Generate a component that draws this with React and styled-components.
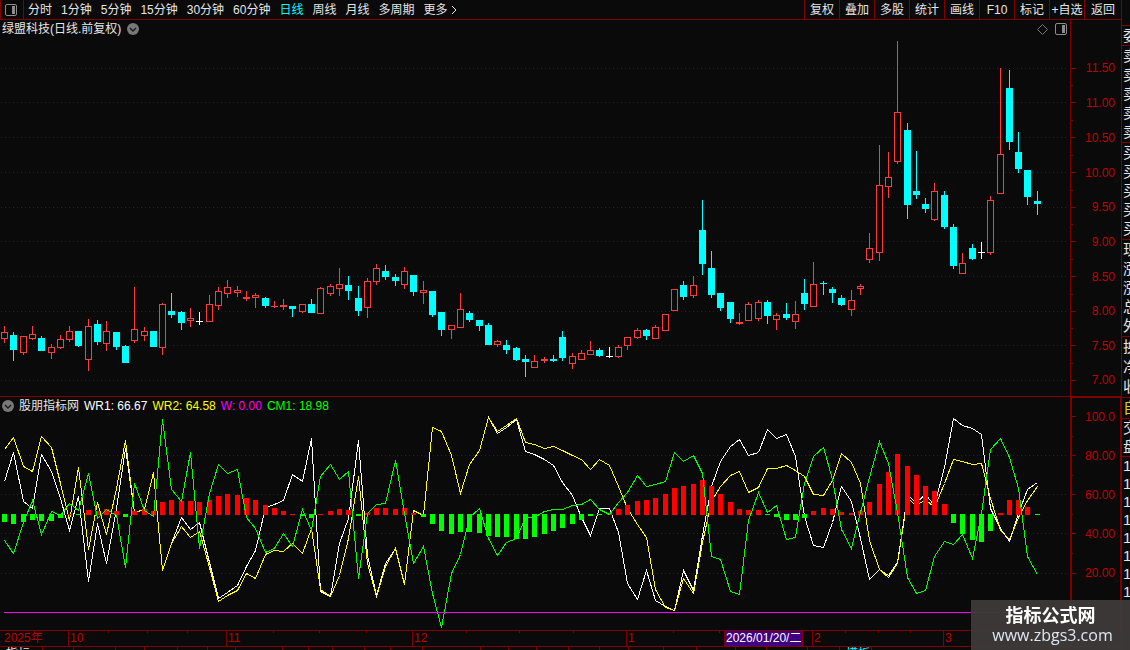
import React, { useState } from "react";
import styled, { createGlobalStyle } from "styled-components";

const GlobalStyle = createGlobalStyle`
  * {
    box-sizing: border-box;
  }
  body {
    margin: 0;
    background: #0a0a0a;
    overflow: hidden;
  }
  button {
    margin: 0;
    padding: 0;
    border: none;
    background: none;
    color: inherit;
    font: inherit;
    cursor: pointer;
  }
  ul, ol {
    margin: 0;
    padding: 0;
    list-style: none;
  }
`;

const LINE = "#800000";
const BG = "#0a0a0a";

const Terminal = styled.div`
  display: flex;
  height: 100vh;
  background: ${BG};
  color: #e6e6e6;
  font-family: "Liberation Sans", "Noto Sans CJK SC", sans-serif;
  font-size: 12px;
  line-height: 18px;
  white-space: nowrap;
`;

const Workspace = styled.div`
  flex: 1;
  min-width: 0;
  display: flex;
  flex-direction: column;
`;

const Toolbar = styled.header`
  flex: 0 0 20px;
  display: flex;
  border-bottom: 1px solid ${LINE};
`;

const LayoutButton = styled.button`
  width: 24px;
  padding-left: 4px;
  border-left: 1px solid ${LINE};
  border-right: 1px solid ${LINE};
  svg {
    display: block;
  }
`;

const Periods = styled.nav`
  flex: 1;
  display: flex;
  gap: 9px;
  padding-left: 4px;
`;

const Period = styled.button`
  color: ${(props) => (props.$active ? "#00ffff" : "#e6e6e6")};
  display: flex;
  align-items: center;
`;

const Tools = styled.div`
  display: grid;
  grid-template-columns: repeat(8, 35px) 37px;
`;

const Tool = styled.button`
  border-left: 1px solid ${LINE};
`;

const Pane = styled.section`
  flex: ${(props) => props.$rows} 1 0;
  min-height: 0;
  display: flex;
`;

const Divider = styled.div`
  flex: 0 0 1px;
  background: ${LINE};
`;

const Plot = styled.div`
  flex: 1;
  min-width: 0;
  position: relative;
`;

const Drawing = styled.svg`
  display: block;
  width: 100%;
  height: 100%;
  shape-rendering: crispEdges;
`;

const PaneHead = styled.div`
  position: absolute;
  top: 0;
  left: 2px;
  right: 3px;
  display: flex;
  align-items: center;
  gap: ${(props) => props.$gap};
  svg {
    display: block;
  }
`;

const HeadTools = styled.div`
  margin-left: auto;
  display: flex;
  align-items: center;
  gap: 7px;
`;

const Reading = styled.span`
  color: ${(props) => props.$color};
`;

const Axis = styled.div`
  flex: 0 0 51px;
  display: flex;
  border-left: 1px solid ${LINE};
  box-shadow: ${(props) => (props.$selected ? `inset 1px 1px ${LINE}, inset -1px 0 ${LINE}` : "none")};
  color: #c00000;
`;

const AxisTicks = styled.svg`
  width: 5px;
  height: 100%;
  shape-rendering: crispEdges;
`;

const AxisLabels = styled.ol`
  flex: 1;
  display: grid;
  grid-template-rows: ${(props) => props.$tracks};
  padding-right: 6px;
  text-align: right;
  li {
    min-height: 0;
    display: flex;
    align-items: center;
    justify-content: flex-end;
  }
`;

const TimeAxis = styled.div`
  flex: 0 0 16px;
  min-height: 0;
  position: relative;
  display: grid;
  grid-template-columns: 68fr 158fr 186fr 214fr 186fr 131fr 127fr;
  margin-right: 51px;
  border-top: 1px solid ${LINE};
  color: #c00000;
  line-height: 15px;
`;

const Month = styled.span`
  padding-left: ${(props) => (props.$first ? "4px" : "1px")};
  border-left: ${(props) => (props.$first ? "none" : `1px solid ${LINE}`)};
`;

const TimeTicks = styled.svg`
  position: absolute;
  top: 0;
  left: 0;
  width: 100%;
  height: 2px;
  shape-rendering: crispEdges;
`;

const DateFlag = styled.time`
  position: absolute;
  top: 0;
  left: 724px;
  height: 15px;
  width: 79px;
  padding-left: 1px;
  border: solid ${LINE};
  border-width: 0 1px;
  background: #400080;
  color: #ffffff;
  line-height: 15px;
`;

const Tabs = styled.div`
  flex: 0 0 4px;
  display: flex;
  overflow: hidden;
  border-top: 1px solid ${LINE};
`;

const Tab = styled.span`
  flex: 0 0 ${(props) => props.$width}px;
  padding-left: 6px;
  border-right: 1px solid ${LINE};
  color: ${(props) => (props.$active ? "#00ffff" : "#e6e6e6")};
  line-height: 14px;
`;

const Quotes = styled.aside`
  flex: 0 0 9px;
  overflow: hidden;
  border-left: 1px solid ${LINE};
  font-size: 15px;
`;

const QuoteGroup = styled.ul`
  height: ${(props) => props.$height}px;
  display: grid;
  grid-auto-rows: 1fr;
  padding-left: 1px;
  border-bottom: ${(props) => (props.$open ? "none" : `1px solid ${LINE}`)};
  color: ${(props) => props.$color || "#e6e6e6"};
  li {
    min-height: 0;
    display: flex;
    align-items: center;
  }
`;

const Watermark = styled.div`
  position: fixed;
  right: 0;
  bottom: 0;
  width: 159px;
  height: 50px;
  padding-top: 4px;
  background: rgba(62, 57, 57, 0.97);
  text-align: center;
  line-height: 21px;
`;

const SiteName = styled.strong`
  display: block;
  font-size: 18px;
  font-family: "Noto Sans CJK SC", sans-serif;
  color: #ffffff;
`;

const SiteUrl = styled.span`
  display: block;
  padding-left: 4px;
  font-size: 16px;
  font-family: "Open Sans", sans-serif;
  color: #dfe6f2;
`;

const periods = ["分时", "1分钟", "5分钟", "15分钟", "30分钟", "60分钟", "日线", "周线", "月线", "多周期", "更多"];
const tools = ["复权", "叠加", "多股", "统计", "画线", "F10", "标记", "+自选", "返回"];

// [kind, high, body top, body bottom, low], u = up, d = down, w = flat
const candles = [
  ["u", 306, 312, 319, 323], ["d", 312, 315, 330, 341], ["u", 316, 316, 333, 335], ["u", 306, 314, 319, 320],
  ["d", 316, 318, 331, 331], ["u", 324, 327, 333, 339], ["u", 315, 319, 328, 329], ["u", 306, 311, 320, 322],
  ["d", 311, 311, 326, 327], ["u", 299, 306, 340, 351], ["d", 300, 304, 322, 325], ["u", 301, 311, 324, 331],
  ["d", 312, 312, 327, 330], ["d", 325, 326, 343, 343], ["u", 267, 309, 321, 323], ["u", 307, 311, 316, 321],
  ["d", 311, 311, 327, 327], ["u", 283, 284, 328, 335], ["d", 273, 291, 295, 298], ["d", 291, 292, 303, 310],
  ["u", 288, 298, 301, 307], ["w", 292, 301, 302, 305], ["u", 275, 284, 302, 302], ["u", 267, 271, 286, 290],
  ["u", 260, 267, 274, 278], ["u", 266, 270, 273, 277], ["u", 271, 277, 279, 281], ["u", 273, 275, 278, 288],
  ["d", 277, 278, 286, 288], ["u", 281, 286, 287, 288], ["u", 279, 285, 287, 290], ["d", 286, 286, 289, 297],
  ["u", 284, 284, 292, 293], ["d", 279, 284, 293, 293], ["u", 267, 268, 294, 294], ["u", 264, 266, 274, 276],
  ["u", 248, 264, 269, 276], ["d", 256, 265, 271, 280], ["d", 266, 278, 291, 296], ["u", 258, 261, 288, 298],
  ["u", 244, 248, 262, 265], ["d", 245, 251, 257, 260], ["d", 254, 257, 261, 266], ["u", 247, 251, 265, 269],
  ["d", 255, 255, 272, 276], ["u", 261, 270, 273, 284], ["d", 271, 271, 295, 297], ["d", 292, 292, 310, 316],
  ["u", 305, 305, 310, 319], ["u", 273, 289, 308, 308], ["d", 291, 293, 300, 302], ["d", 300, 300, 306, 311],
  ["d", 303, 305, 325, 325], ["u", 320, 321, 325, 327], ["d", 320, 325, 330, 334], ["d", 327, 328, 340, 341],
  ["d", 335, 339, 342, 357], ["u", 335, 341, 348, 348], ["u", 337, 339, 341, 343], ["d", 335, 339, 341, 342],
  ["d", 311, 317, 338, 341], ["u", 333, 336, 344, 349], ["u", 330, 333, 340, 340], ["u", 321, 330, 335, 335],
  ["d", 328, 330, 336, 337], ["w", 327, 336, 337, 338], ["u", 325, 327, 337, 338], ["u", 317, 317, 326, 330],
  ["u", 308, 310, 318, 319], ["d", 309, 310, 316, 320], ["u", 305, 307, 319, 319], ["u", 294, 294, 311, 311],
  ["u", 269, 269, 291, 291], ["d", 261, 265, 277, 280], ["u", 256, 265, 276, 278], ["d", 180, 210, 244, 255],
  ["d", 231, 248, 275, 278], ["d", 273, 273, 288, 291], ["d", 282, 282, 299, 303], ["u", 293, 302, 304, 305],
  ["u", 282, 284, 301, 301], ["u", 280, 282, 299, 301], ["d", 280, 282, 296, 304], ["u", 293, 295, 300, 310],
  ["d", 283, 294, 298, 300], ["u", 281, 294, 302, 309], ["d", 259, 273, 284, 290], ["u", 242, 264, 287, 287],
  ["d", 261, 263, 264, 275], ["d", 267, 269, 273, 283], ["d", 275, 278, 285, 286], ["u", 270, 280, 290, 296],
  ["u", 264, 266, 269, 275], ["u", 213, 228, 240, 243], ["u", 125, 165, 233, 241], ["u", 132, 157, 167, 178],
  ["u", 21, 92, 142, 144], ["d", 103, 110, 185, 199], ["d", 131, 171, 175, 179], ["d", 178, 184, 189, 193],
  ["u", 163, 171, 200, 201], ["d", 171, 175, 207, 209], ["d", 204, 207, 246, 249], ["u", 233, 243, 254, 254],
  ["d", 224, 228, 239, 240], ["w", 222, 232, 233, 239], ["u", 176, 180, 233, 235], ["u", 48, 134, 174, 174],
  ["d", 50, 68, 122, 130], ["d", 112, 132, 149, 153], ["d", 150, 150, 177, 185], ["d", 171, 181, 184, 195],
];

// indicator series, in thirds of a plot unit from the top
const wr1 = [
  259, 172, 319, 339, 176, 228, 310, 405, 302, 559, 385, 505, 340, 158, 350, 343, 232, 525, 445, 367,
  403, 382, 500, 608, 591, 570, 514, 465, 337, 328, 316, 238, 259, 130, 588, 602, 445, 368, 136, 480,
  600, 505, 458, 567, 345, 360, 95, 107, 180, 295, 208, 165, 65, 115, 96, 71, 168, 177, 193, 211,
  262, 300, 367, 421, 340, 340, 410, 565, 613, 524, 614, 634, 646, 524, 584, 420, 273, 198, 152, 133,
  181, 172, 103, 130, 118, 184, 362, 451, 457, 380, 274, 317, 430, 553, 521, 541, 502, 300, 322, 298,
  331, 215, 70, 91, 100, 118, 340, 400, 439, 355, 283, 262,
];
const wr2 = [
  163, 127, 213, 227, 124, 157, 265, 376, 217, 463, 322, 418, 280, 136, 350, 343, 232, 525, 445, 394,
  427, 409, 515, 619, 600, 586, 535, 549, 478, 465, 469, 443, 475, 400, 583, 604, 540, 430, 244, 505,
  604, 512, 458, 567, 345, 360, 95, 107, 180, 295, 208, 165, 65, 109, 91, 68, 142, 146, 160, 152,
  165, 180, 193, 223, 193, 211, 274, 340, 388, 425, 583, 637, 646, 550, 595, 440, 318, 273, 239, 229,
  290, 275, 220, 220, 211, 226, 244, 298, 301, 256, 175, 200, 265, 436, 521, 547, 505, 310, 331, 313,
  337, 265, 193, 199, 208, 203, 310, 406, 433, 367, 316, 274,
];
const cm1 = [
  435, 475, 380, 314, 418, 347, 361, 323, 345, 235, 368, 341, 359, 517, 265, 345, 362, 73, 281, 318,
  172, 458, 295, 208, 235, 223, 367, 398, 472, 460, 415, 453, 343, 404, 244, 208, 253, 229, 550, 355,
  328, 323, 194, 355, 505, 452, 595, 695, 535, 478, 365, 340, 428, 481, 442, 430, 366, 366, 347, 343,
  343, 331, 327, 313, 343, 357, 320, 292, 241, 272, 268, 259, 172, 199, 181, 235, 484, 491, 587, 596,
  376, 292, 352, 331, 433, 427, 265, 184, 157, 253, 403, 460, 350, 245, 139, 205, 350, 547, 593, 586,
  484, 439, 448, 417, 490, 355, 163, 130, 187, 280, 484, 538,
];
const momentum = [
  -8, -10, -8, -6, -7, -7, -4, 1, -1, 5, 4, 6, 4, -3, 4, 6, 4, 13, 15, 14,
  14, 13, 15, 19, 21, 20, 17, 15, 10, 7, 4, 1, -2, -4, 1, 4, 6, 5, -2, 2,
  7, 7, 6, 7, 2, -3, -10, -17, -20, -18, -18, -19, -22, -23, -23, -25, -25, -23, -20, -17,
  -14, -10, -6, -2, -1, 2, 6, 10, 14, 15, 17, 21, 27, 29, 31, 35, 29, 21, 13, 6,
  5, 5, -1, -3, -6, -6, -4, 4, 7, 6, 3, 2, 4, 13, 31, 43, 61, 49, 40, 29,
  24, 11, -9, -20, -26, -28, -17, 2, 15, 15, 8, -1,
];

const priceLabels = ["11.50", "11.00", "10.50", "10.00", "9.50", "9.00", "8.50", "8.00", "7.50", "7.00"];
const priceRows = [48, 82, 117, 152, 187, 221, 256, 291, 325, 360];
const priceMinor = [65, 100, 135, 170, 204, 239, 274, 308, 343];
const levelLabels = ["100.0", "80.00", "60.00", "40.00", "20.00"];
const levelRows = [19, 58, 97, 136, 176];
const levelMinor = [39, 78, 117, 156];
const months = ["2025年", "10", "11", "12", "1", "2", "3"];
const timeTicks = [108, 147, 187, 273, 319, 366, 466, 519, 573, 673, 719, 845, 878, 910];

const tabs = [
  { width: 43, text: "指标" }, { width: 31 }, { width: 42 }, { width: 29 }, { width: 33 }, { width: 30 },
  { width: 28 }, { width: 47 }, { width: 26 }, { width: 24 }, { width: 32 }, { width: 26 }, { width: 32 },
  { width: 58 }, { width: 28 }, { width: 28 }, { width: 32 }, { width: 31 }, { width: 29 }, { width: 35 },
  { width: 33 }, { width: 39 }, { width: 31 }, { width: 41 }, { width: 32 }, { width: 32, text: "模板", active: true },
];

const quoteGroups = [
  { height: 26, rows: [] },
  { height: 20, rows: ["委"] },
  { height: 97, rows: ["卖", "卖", "卖", "卖", "卖"] },
  { height: 97, rows: ["买", "买", "买", "买", "买"] },
  { height: 97, rows: ["现", "涨", "涨", "总", "外"] },
  { height: 61, rows: ["换", "净", "收"] },
  { height: 21, rows: ["自"], color: "#d8d800" },
  { height: 38, rows: ["交", "盘"] },
  { height: 144, rows: ["1", "1", "1", "1", "1", "1", "1", "1"], open: true },
];

const barX = (i) => Math.floor(4.52 + i * 9.304);
const linePoints = (series) => series.map((v, i) => `${barX(i)},${Math.round(v / 3) - 2}`).join(" ");

const Grid = ({ rows }) => (
  <g stroke="#6a0808" strokeDasharray="1 3">
    {rows.map((y) => (
      <line key={y} x1="1" x2="1068" y1={y + 0.5} y2={y + 0.5} />
    ))}
  </g>
);

const Candle = ({ data, x }) => {
  const [kind, high, top, bottom, low] = data;
  const color = { u: "#ff3c3c", d: "#00ffff", w: "#ffffff" }[kind];
  return (
    <g fill={color}>
      <rect x={x} y={high} width="1" height={low - high} />
      <rect x={x - 3} y={top} width="7" height={bottom - top} />
      {kind === "u" && bottom - top > 2 && (
        <rect x={x - 2} y={top + 1} width="5" height={bottom - top - 2} fill={BG} />
      )}
    </g>
  );
};

const Ticks = ({ height, major, minor }) => (
  <AxisTicks viewBox={`0 0 5 ${height}`} preserveAspectRatio="none" fill={LINE}>
    {major.map((y) => <rect key={y} x="0" y={y} width="5" height="1" />)}
    {minor.map((y) => <rect key={y} x="0" y={y} width="2" height="1" />)}
  </AxisTicks>
);

const PanelIcon = () => (
  <svg width="12" height="12" viewBox="0 0 12 12">
    <rect x="0.5" y="0.5" width="11" height="11" rx="1.5" fill="none" stroke="#8c8c8c" />
    <rect x="7" y="2" width="3" height="8" fill="#8c8c8c" />
  </svg>
);

const ChevronBadge = () => (
  <svg width="12" height="12" viewBox="0 0 12 12">
    <circle cx="6" cy="6" r="6" fill="#787878" />
    <path d="M3 5l3 3 3-3" fill="none" stroke="#1a1a1a" strokeWidth="1.4" />
  </svg>
);

const App = () => {
  const [period, setPeriod] = useState("日线");

  return (
    <Terminal>
      <GlobalStyle />
      <Workspace>
        <Toolbar>
          <LayoutButton aria-label="布局"><PanelIcon /></LayoutButton>
          <Periods>
            {periods.map((name) => (
              <Period key={name} $active={name === period} onClick={() => setPeriod(name)}>
                {name}
                {name === "更多" && (
                  <svg width="10" height="10" viewBox="0 0 10 10">
                    <path d="M4 1l4 4-4 4" fill="none" stroke="#e6e6e6" />
                  </svg>
                )}
              </Period>
            ))}
          </Periods>
          <Tools>
            {tools.map((name) => <Tool key={name}>{name}</Tool>)}
          </Tools>
        </Toolbar>

        <Pane $rows={376}>
          <Plot>
            <Drawing viewBox="0 0 1070 376" preserveAspectRatio="none">
              <Grid rows={priceRows} />
              {candles.map((data, i) => <Candle key={i} data={data} x={barX(i)} />)}
            </Drawing>
            <PaneHead $gap="6px">
              <span>绿盟科技(日线.前复权)</span>
              <button aria-label="展开"><ChevronBadge /></button>
              <HeadTools>
                <svg width="11" height="11" viewBox="0 0 11 11">
                  <path d="M5.5 0.5l5 5-5 5-5-5z" fill="none" stroke="#787878" />
                </svg>
                <PanelIcon />
              </HeadTools>
            </PaneHead>
          </Plot>
          <Axis>
            <Ticks height={376} major={priceRows} minor={priceMinor} />
            <AxisLabels $tracks="31fr 34fr 35fr 35fr 35fr 34fr 35fr 35fr 34fr 35fr 33fr">
              <li />
              {priceLabels.map((label) => <li key={label}>{label}</li>)}
            </AxisLabels>
          </Axis>
        </Pane>

        <Divider />

        <Pane $rows={233}>
          <Plot>
            <Drawing viewBox="0 0 1070 233" preserveAspectRatio="none">
              <Grid rows={levelRows.slice(1)} />
              <g fill="none" transform="translate(0.5 0.5)">
                <polyline points={linePoints(wr1)} stroke="#ffffff" />
                <polyline points={linePoints(wr2)} stroke="#ffff00" />
              </g>
              {momentum.map((v, i) => (
                <rect
                  key={i}
                  x={barX(i) - 2}
                  y={v > 0 ? 118 - v : 117}
                  width="5"
                  height={Math.abs(v)}
                  fill={v > 0 ? "#ff0000" : "#00ff00"}
                />
              ))}
              <polyline points={linePoints(cm1)} fill="none" stroke="#00ff00" transform="translate(0.5 0.5)" />
              <rect x="4" y="215" width="1066" height="1" fill="#ff00ff" />
            </Drawing>
            <PaneHead $gap="5px">
              <button aria-label="指标设置"><ChevronBadge /></button>
              <span>股朋指标网</span>
              <Reading $color="#ffffff">WR1: 66.67</Reading>
              <Reading $color="#ffff00">WR2: 64.58</Reading>
              <Reading $color="#ff00ff">W: 0.00</Reading>
              <Reading $color="#00ff00">CM1: 18.98</Reading>
            </PaneHead>
          </Plot>
          <Axis $selected>
            <Ticks height={233} major={levelRows} minor={levelMinor} />
            <AxisLabels $tracks="repeat(5, 39fr) 38fr">
              {levelLabels.map((label) => <li key={label}>{label}</li>)}
            </AxisLabels>
          </Axis>
        </Pane>

        <TimeAxis>
          {months.map((month, i) => <Month key={month} $first={i === 0}>{month}</Month>)}
          <TimeTicks viewBox="0 0 1070 2" preserveAspectRatio="none" fill={LINE}>
            {timeTicks.map((x) => <rect key={x} x={x} y="0" width="1" height="2" />)}
          </TimeTicks>
          <DateFlag dateTime="2026-01-20">2026/01/20/二</DateFlag>
        </TimeAxis>

        <Tabs>
          {tabs.map((tab, i) => (
            <Tab key={i} $width={tab.width} $active={tab.active}>{tab.text}</Tab>
          ))}
        </Tabs>
      </Workspace>

      <Quotes>
        {quoteGroups.map((group, i) => (
          <QuoteGroup key={i} $height={group.height} $color={group.color} $open={group.open}>
            {group.rows.map((text, row) => <li key={row}>{text}</li>)}
          </QuoteGroup>
        ))}
      </Quotes>

      <Watermark>
        <SiteName>指标公式网</SiteName>
        <SiteUrl>www.zbgs3.com</SiteUrl>
      </Watermark>
    </Terminal>
  );
};

export default App;
